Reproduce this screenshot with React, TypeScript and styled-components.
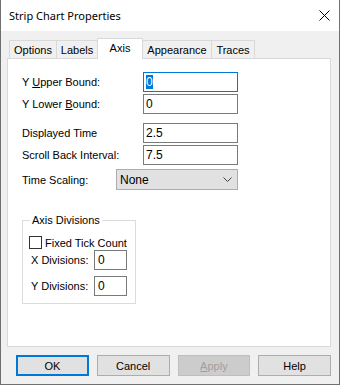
import React from "react";
import styled, { createGlobalStyle } from "styled-components";

const Global = createGlobalStyle`
  html, body { margin: 0; padding: 0; background: #ffffff; }
  body { font-family: "Liberation Sans", Arial, sans-serif; font-size: 11px; color: #000; }
  * { box-sizing: border-box; }
`;

const Window = styled.div`
  width: 340px;
  height: 385px;
  display: flex;
  flex-direction: column;
  border-left: 1px solid #707070;
  border-right: 1px solid #707070;
  border-bottom: 1px solid #707070;
  background: #f0f0f0;
`;

const TitleBar = styled.div`
  height: 31px;
  flex: none;
  background: #ffffff;
  display: flex;
  align-items: center;
  justify-content: space-between;
  padding: 0 9px 0 8px;
`;

const Title = styled.span`
  font-family: "Noto Sans", "Segoe UI", sans-serif;
  font-size: 11px;
  color: #000;
  margin-top: -1px;
`;

const CloseBtn = styled.div`
  width: 11px;
  height: 11px;
  display: flex;
`;

const Body = styled.div`
  flex: 1;
  display: flex;
  flex-direction: column;
  padding: 7px 8px 8px 6px;
`;

const TabStrip = styled.div`
  height: 20px;
  display: flex;
  align-items: flex-start;
  padding-left: 2px;
  position: relative;
  z-index: 1;
`;

const Tab = styled.div<{ $active?: boolean; $w: number }>`
  width: ${(p) => p.$w}px;
  height: ${(p) => (p.$active ? 21 : 18)}px;
  margin-top: ${(p) => (p.$active ? 0 : 2)}px;
  margin-left: -1px;
  background: ${(p) => (p.$active ? "#ffffff" : "#f0f0f0")};
  border: 1px solid #d9d9d9;
  border-bottom: none;
  display: flex;
  align-items: center;
  justify-content: center;
  padding-bottom: ${(p) => (p.$active ? 3 : 0)}px;
  position: relative;
  z-index: ${(p) => (p.$active ? 2 : 1)};
  &:first-child { margin-left: 0; }
`;

const Panel = styled.div`
  height: 289px;
  background: #ffffff;
  border: 1px solid #d9d9d9;
  display: flex;
  flex-direction: column;
  padding: 13px 0 0 14px;
`;

const FieldRow = styled.div<{ $gap?: number }>`
  display: flex;
  align-items: center;
  margin-top: ${(p) => p.$gap ?? 2}px;
  &:first-child { margin-top: 0; }
`;

const Label = styled.span<{ $w: number }>`
  width: ${(p) => p.$w}px;
  flex: none;
  white-space: nowrap;
`;

const TextBox = styled.div<{ $w: number; $focus?: boolean; $pad?: number }>`
  width: ${(p) => p.$w}px;
  height: 20px;
  border: 1px solid ${(p) => (p.$focus ? "#0078d7" : "#7a7a7a")};
  background: #fff;
  display: flex;
  align-items: center;
  padding-left: ${(p) => p.$pad ?? 2}px;
  font-size: 12px;
`;

const Selected = styled.span`
  background: #0078d7;
  color: #ffffff;
  line-height: 14px;
`;

const Select = styled.div`
  width: 122px;
  height: 21px;
  border: 1px solid #adadad;
  background: #e1e1e1;
  display: flex;
  align-items: center;
  justify-content: space-between;
  padding: 0 5px 0 3px;
  font-size: 12px;
`;

const Group = styled.fieldset`
  width: 114px;
  height: 90px;
  margin: 24px 0 0 0;
  padding: 0 0 7px 6px;
  border: 1px solid #dcdcdc;
  display: flex;
  flex-direction: column;
`;

const Legend = styled.legend`
  padding: 0 2px;
  margin-left: 1px;
  line-height: 13px;
`;

const CheckRow = styled.div`
  display: flex;
  align-items: center;
  gap: 3px;
  margin-top: 9px;
`;

const CheckBox = styled.div`
  width: 13px;
  height: 13px;
  border: 1px solid #333333;
  background: #ffffff;
`;

const DivRow = styled.div<{ $top: number }>`
  display: flex;
  align-items: center;
  margin-top: ${(p) => p.$top}px;
  padding-left: 2px;
`;

const ButtonRow = styled.div`
  display: flex;
  gap: 8px;
  margin-top: 8px;
  padding-left: 9px;
`;

const Button = styled.div<{ $default?: boolean; $disabled?: boolean }>`
  width: 73px;
  height: 21px;
  display: flex;
  align-items: center;
  justify-content: center;
  background: ${(p) => (p.$disabled ? "#cccccc" : "#e1e1e1")};
  border: ${(p) => (p.$default ? "2px solid #0078d7" : p.$disabled ? "1px solid #bfbfbf" : "1px solid #adadad")};
  color: ${(p) => (p.$disabled ? "#a0a0a0" : "#000")};
`;

const U = styled.span`
  text-decoration: underline;
`;

export default function App() {
  return (
    <>
      <Global />
      <Window>
        <TitleBar>
          <Title>Strip Chart Properties</Title>
          <CloseBtn>
            <svg width="11" height="11" viewBox="0 0 11 11">
              <path d="M0.5 0.5 L10.5 10.5 M10.5 0.5 L0.5 10.5" stroke="#000" strokeWidth="1" />
            </svg>
          </CloseBtn>
        </TitleBar>
        <Body>
          <TabStrip>
            <Tab $w={48}>Options</Tab>
            <Tab $w={42}>Labels</Tab>
            <Tab $w={46} $active>Axis</Tab>
            <Tab $w={70}>Appearance</Tab>
            <Tab $w={44}>Traces</Tab>
          </TabStrip>
          <Panel>
            <FieldRow>
              <Label $w={121}>
                Y <U>U</U>pper Bound:
              </Label>
              <TextBox $w={95} $focus>
                <Selected>0</Selected>
              </TextBox>
            </FieldRow>
            <FieldRow>
              <Label $w={121}>
                Y Lower <U>B</U>ound:
              </Label>
              <TextBox $w={95}>0</TextBox>
            </FieldRow>
            <FieldRow $gap={9}>
              <Label $w={121}>Displayed Time</Label>
              <TextBox $w={95}>2.5</TextBox>
            </FieldRow>
            <FieldRow>
              <Label $w={121}>Scroll Back Interval:</Label>
              <TextBox $w={95}>7.5</TextBox>
            </FieldRow>
            <FieldRow $gap={4}>
              <Label $w={94}>Time Scaling:</Label>
              <Select>
                <span>None</span>
                <svg width="9" height="5" viewBox="0 0 9 5">
                  <path d="M0.5 0.5 L4.5 4.5 L8.5 0.5" stroke="#404040" strokeWidth="1" fill="none" />
                </svg>
              </Select>
            </FieldRow>
            <Group>
              <Legend>Axis Divisions</Legend>
              <CheckRow>
                <CheckBox />
                <span>Fixed Tick Count</span>
              </CheckRow>
              <DivRow $top={1}>
                <Label $w={63}>X Divisions:</Label>
                <TextBox $w={33} $pad={3}>0</TextBox>
              </DivRow>
              <DivRow $top={6}>
                <Label $w={63}>Y Divisions:</Label>
                <TextBox $w={33} $pad={3}>0</TextBox>
              </DivRow>
            </Group>
          </Panel>
          <ButtonRow>
            <Button $default>OK</Button>
            <Button>Cancel</Button>
            <Button $disabled>
              <U>A</U>pply
            </Button>
            <Button>Help</Button>
          </ButtonRow>
        </Body>
      </Window>
    </>
  );
}
